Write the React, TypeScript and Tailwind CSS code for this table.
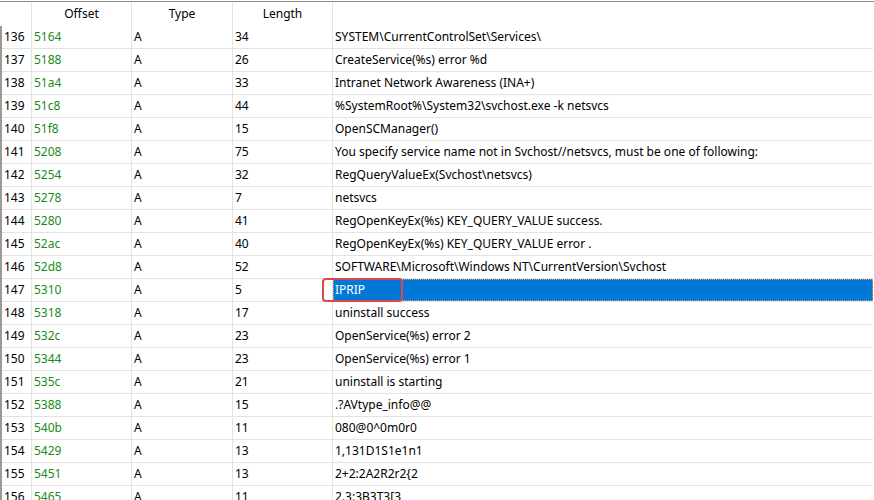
// --- Imports ---
import * as React from "react";

// --- Data ---
const ROWS: [number, string, string, number, string][] = [
    [136, "5164", "A", 34, "SYSTEM\\CurrentControlSet\\Services\\"],
    [137, "5188", "A", 26, "CreateService(%s) error %d"],
    [138, "51a4", "A", 33, "Intranet Network Awareness (INA+)"],
    [139, "51c8", "A", 44, "%SystemRoot%\\System32\\svchost.exe -k netsvcs"],
    [140, "51f8", "A", 15, "OpenSCManager()"],
    [141, "5208", "A", 75, "You specify service name not in Svchost//netsvcs, must be one of following:"],
    [142, "5254", "A", 32, "RegQueryValueEx(Svchost\\netsvcs)"],
    [143, "5278", "A", 7, "netsvcs"],
    [144, "5280", "A", 41, "RegOpenKeyEx(%s) KEY_QUERY_VALUE success."],
    [145, "52ac", "A", 40, "RegOpenKeyEx(%s) KEY_QUERY_VALUE error ."],
    [146, "52d8", "A", 52, "SOFTWARE\\Microsoft\\Windows NT\\CurrentVersion\\Svchost"],
    [147, "5310", "A", 5, "IPRIP"],
    [148, "5318", "A", 17, "uninstall success"],
    [149, "532c", "A", 23, "OpenService(%s) error 2"],
    [150, "5344", "A", 23, "OpenService(%s) error 1"],
    [151, "535c", "A", 21, "uninstall is starting"],
    [152, "5388", "A", 15, ".?AVtype_info@@"],
    [153, "540b", "A", 11, "080@0^0m0r0"],
    [154, "5429", "A", 13, "1,131D1S1e1n1"],
    [155, "5451", "A", 13, "2+2:2A2R2r2{2"],
    [156, "5465", "A", 11, "2.3:3B3T3[3"],
];

const SELECTED = 147;
const COLS = "grid grid-cols-[32px_100px_101px_100px_1fr]";

export default function App() {
    return (
        <div
            className="h-[500px] w-[874px] overflow-hidden bg-white text-[12px] text-black"
            style={{fontFamily: '"Segoe UI", "Noto Sans", "Open Sans", sans-serif'}}
        >
            <div className="mt-px border-t border-[#8c8c8c] pr-px">
                {/* Header */}
                <div className={`${COLS} h-[24px] items-center`}>
                    <div className="h-full border-r border-[#e3e3e3]"/>
                    <div className="h-full border-r border-[#e3e3e3] flex items-center justify-center pb-px">Offset</div>
                    <div className="h-full border-r border-[#e3e3e3] flex items-center justify-center pb-px">Type</div>
                    <div className="h-full border-r border-[#e3e3e3] flex items-center justify-center pb-px">Length</div>
                    <div/>
                </div>

                {/* Rows */}
                <div className="border-l-2 border-[#9a9a9a]">
                    {ROWS.map(([idx, off, type, len, str]) => (
                        <Row key={idx} idx={idx} off={off} type={type} len={len} str={str}
                             selected={idx === SELECTED}/>
                    ))}
                </div>
            </div>
        </div>
    );
}

// --- Table Row ---
function Row({idx, off, type, len, str, selected}: {
    idx: number;
    off: string;
    type: string;
    len: number;
    str: string;
    selected: boolean;
}) {
    return (
        <div className="grid grid-cols-[30px_100px_101px_100px_1fr] h-[23px] border-b border-[#e3e3e3]">
            <div className="border-r border-[#e3e3e3] flex items-center pl-[2px]">{idx}</div>
            <div className="border-r border-[#e3e3e3] flex items-center pl-[2px] text-[#1a8a1a]">{off}</div>
            <div className="border-r border-[#e3e3e3] flex items-center pl-[2px]">{type}</div>
            <div className="border-r border-[#e3e3e3] flex items-center pl-[2px]">{len}</div>
            {selected ? (
                <div className="relative flex items-center">
                    <div
                        className="absolute inset-0 bg-[#0078d7] border border-dotted border-[#f0a050] flex items-center pl-px text-white">
                        {str}
                    </div>
                    {/* Red annotation box */}
                    <div className="absolute left-[-11px] top-[-1px] h-[24px] w-[81px] rounded-[4px] border-2 border-[#e0454a]"/>
                </div>
            ) : (
                <div className="flex items-center pl-[2px] whitespace-nowrap">{str}</div>
            )}
        </div>
    );
}
